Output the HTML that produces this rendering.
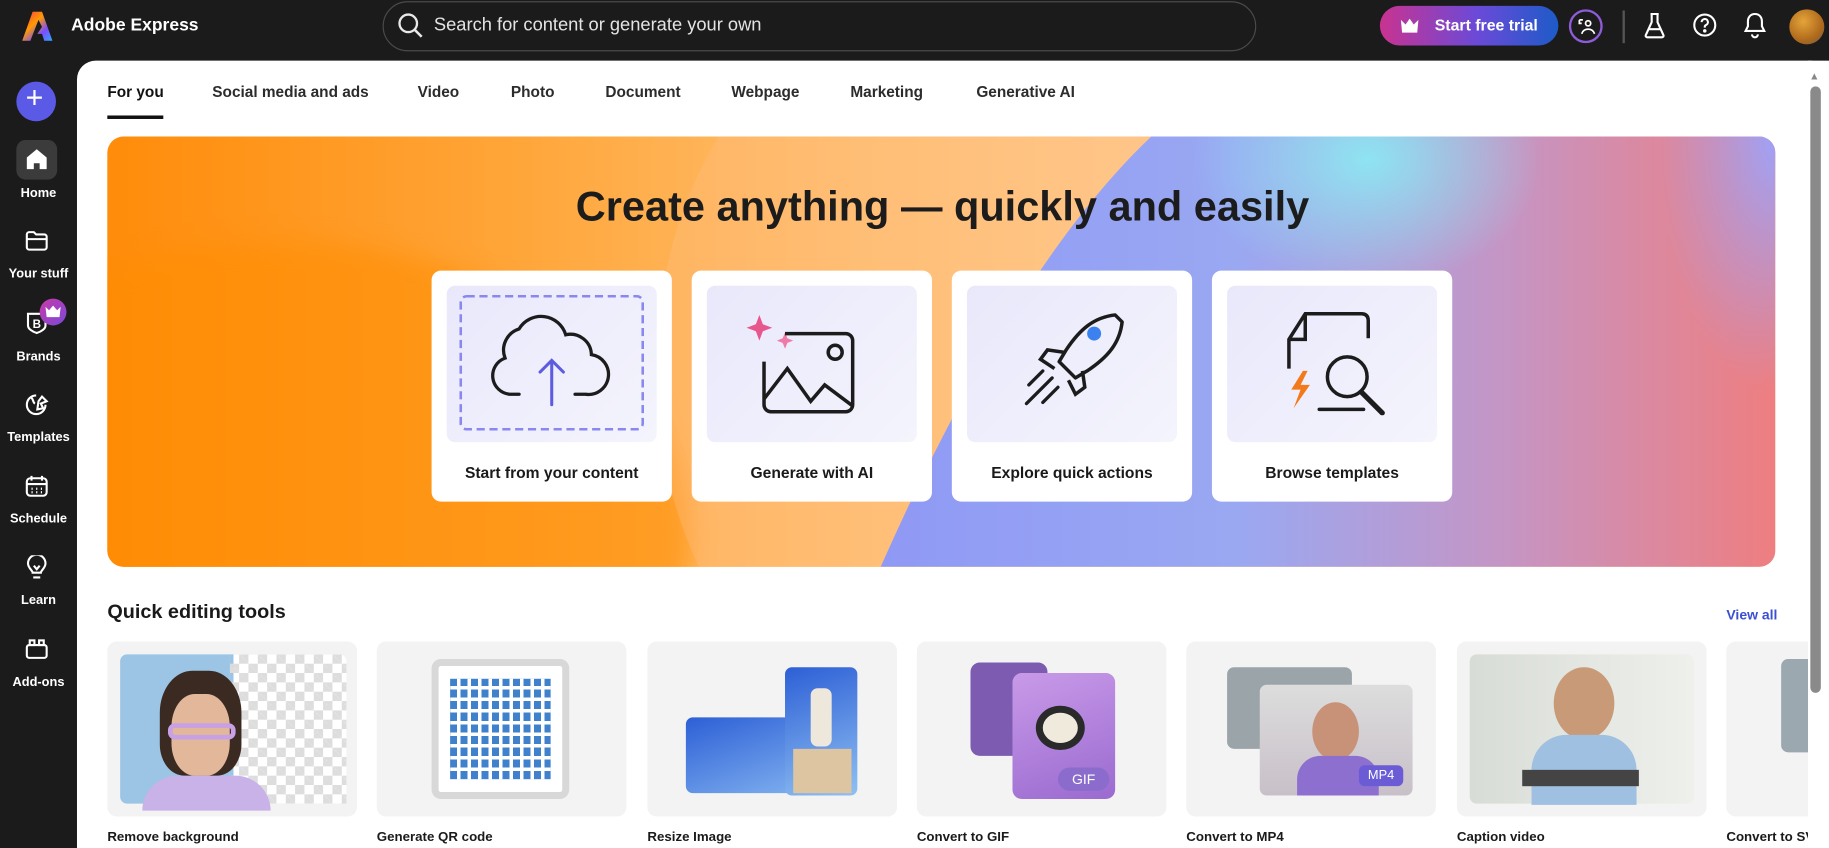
<!DOCTYPE html>
<html><head><meta charset="utf-8">
<style>
*{box-sizing:border-box;margin:0;padding:0}
html,body{width:1829px;height:848px;overflow:hidden;background:#1b1b1b;font-family:"Liberation Sans",sans-serif}
#w{position:absolute;left:0;top:0;width:1568px;height:727px;transform:scale(1.16645);transform-origin:0 0;background:#1b1b1b;overflow:hidden}
.a{position:absolute}
.t{position:absolute;white-space:nowrap}
.side{color:#fff;font-size:11px;font-weight:bold;width:66px;text-align:center;left:0}
.tab{top:71px;font-size:13.2px;color:#2c2c2c;font-weight:bold}
.card{position:absolute;top:232px;width:206px;height:198px;background:#fff;border-radius:8px}
.card .in{position:absolute;left:13px;top:13px;width:180px;height:134px;border-radius:7px;background:linear-gradient(135deg,#e9e8fb,#f4f4fd)}
.card .lb{position:absolute;top:166px;width:100%;text-align:center;font-size:13.4px;font-weight:bold;color:#1a1a1a}
.tool{position:absolute;top:550px;width:214px;height:150px;background:#f3f3f3;border-radius:8px;overflow:hidden}
.tl{position:absolute;top:712px;font-size:11.4px;font-weight:bold;color:#1a1a1a}
</style></head><body><div id="w">
<svg class="a" style="left:19px;top:10px" width="26" height="25" viewBox="0 0 26 25"><defs><linearGradient id="lg" x1="0" y1="0" x2="1" y2="1"><stop offset="0" stop-color="#ff2d55"/><stop offset=".4" stop-color="#ff9a00"/><stop offset=".7" stop-color="#7b4dff"/><stop offset="1" stop-color="#2fa8ff"/></linearGradient></defs><path d="M9 0h8l9 25h-7l-2-6h-4l4-6-3-6-7 18H0z" fill="url(#lg)"/></svg>
<div class="t" style="left:61px;top:13px;color:#fff;font-size:15px;font-weight:bold">Adobe Express</div>
<div class="a" style="left:328px;top:1px;width:749px;height:43px;border:1.5px solid #4a4a4a;border-radius:22px"></div>
<svg class="a" style="left:341px;top:11px" width="22" height="22" viewBox="0 0 22 22"><circle cx="9" cy="9" r="7.5" fill="none" stroke="#e8e8e8" stroke-width="2"/><path d="M14.5 14.5l6 6" stroke="#e8e8e8" stroke-width="2.2"/></svg>
<div class="t" style="left:372px;top:13px;color:#e3e3e3;font-size:15.7px">Search for content or generate your own</div>
<div class="a" style="left:1183px;top:5px;width:153px;height:34px;border-radius:17px;background:linear-gradient(90deg,#c93390,#6a4ad8 55%,#1d5bc8)"></div>
<svg class="a" style="left:1200px;top:15px" width="17" height="14" viewBox="0 0 17 14"><path d="M1 2l4 4 3.5-5 3.5 5 4-4-1 11H2z" fill="#fff"/></svg>
<div class="t" style="left:1230px;top:14px;color:#fff;font-size:13.6px;font-weight:bold">Start free trial</div>
<div class="a" style="left:1345px;top:8px;width:29px;height:29px;border-radius:50%;border:2px solid #8e5cd8"></div>
<svg class="a" style="left:1351px;top:14px" width="17" height="17" viewBox="0 0 17 17" fill="none" stroke="#fff" stroke-width="1.5"><circle cx="10.5" cy="6" r="2.2"/><path d="M5 15c1-3 3-4 5.5-4s4.5 1 5.5 4M3 3h3M3 3v3h2"/></svg>
<div class="a" style="left:1391px;top:9px;width:1.5px;height:28px;background:#555"></div>
<svg class="a" style="left:1409px;top:11px" width="19" height="22" viewBox="0 0 19 22" fill="none" stroke="#fff" stroke-width="1.8"><path d="M6 1h7M7 1v7L2 19c-.5 1 .2 2 1.2 2h12.6c1 0 1.7-1 1.2-2L12 8V1M4 14h11"/></svg>
<svg class="a" style="left:1451px;top:11px" width="21" height="21" viewBox="0 0 21 21" fill="none" stroke="#fff" stroke-width="1.8"><circle cx="10.5" cy="10.5" r="9"/><path d="M7.8 8a2.7 2.7 0 1 1 3.7 2.5c-.7.3-1 .8-1 1.6v.6"/><circle cx="10.5" cy="15.5" r=".6" fill="#fff"/></svg>
<svg class="a" style="left:1494px;top:10px" width="21" height="23" viewBox="0 0 21 23" fill="none" stroke="#fff" stroke-width="1.8"><path d="M10.5 2c-4 0-6 3-6 6.5v4L2.5 16.5h16l-2-4V8.5c0-3.5-2-6.5-6-6.5zM8 19.5a2.5 2.5 0 0 0 5 0"/></svg>
<div class="a" style="left:1534px;top:8px;width:30px;height:30px;border-radius:50%;background:radial-gradient(circle at 40% 35%,#e5a43a,#b06a1c 60%,#6a5a48)"></div>
<div class="a" style="left:14px;top:70px;width:34px;height:34px;border-radius:50%;background:#5a5ae6"></div>
<div class="t" style="left:22px;top:68px;color:#fff;font-size:26px;font-weight:300">+</div>
<div class="a" style="left:14px;top:120px;width:35px;height:34px;border-radius:8px;background:#3b3b3b"></div>
<svg class="a" style="left:22px;top:127px" width="19" height="19" viewBox="0 0 19 19"><path d="M9.5 1L1 8v10h6v-5h5v5h6V8z" fill="#fff"/></svg>
<div class="t side" style="top:160px">Home</div>
<svg class="a" style="left:21px;top:197px" width="21" height="19" viewBox="0 0 21 19" fill="none" stroke="#fff" stroke-width="1.8"><path d="M2 4a2 2 0 0 1 2-2h4l2 2h7a2 2 0 0 1 2 2v9a2 2 0 0 1-2 2H4a2 2 0 0 1-2-2zM2 8h17"/></svg>
<div class="t side" style="top:229px">Your stuff</div>
<svg class="a" style="left:22px;top:266px" width="19" height="21" viewBox="0 0 19 21" fill="none" stroke="#fff" stroke-width="1.8"><path d="M2 3h15v10c0 3-4 5.5-7.5 6.5C6 18.5 2 16 2 13z"/><text x="6" y="15" font-size="10" font-weight="bold" fill="#fff" stroke="none" font-family="Liberation Sans">B</text></svg>
<div class="a" style="left:34px;top:256px;width:23px;height:23px;border-radius:50%;background:linear-gradient(135deg,#c93aa8,#7a4ad8)"></div>
<svg class="a" style="left:39px;top:262px" width="13" height="10" viewBox="0 0 13 10"><path d="M0 1l3 3 3.5-4 3.5 4 3-3-1 9H1z" fill="#fff"/></svg>
<div class="t side" style="top:300px">Brands</div>
<svg class="a" style="left:21px;top:337px" width="21" height="21" viewBox="0 0 21 21" fill="none" stroke="#fff" stroke-width="1.8"><path d="M10 2a8 8 0 1 0 8 8M6 4c2 2 1 4 3 5M12 7l3-4 4 4-5 2 2 4-5 1z"/></svg>
<div class="t side" style="top:369px">Templates</div>
<svg class="a" style="left:21px;top:407px" width="21" height="20" viewBox="0 0 21 20" fill="none" stroke="#fff" stroke-width="1.8"><rect x="2" y="3" width="17" height="15" rx="3"/><path d="M6 1v4M15 1v4M2 8h17"/><path d="M6 12h1M10 12h1M14 12h1M6 15h1M10 15h1M14 15h1" stroke-width="2"/></svg>
<div class="t side" style="top:439px">Schedule</div>
<svg class="a" style="left:22px;top:476px" width="19" height="22" viewBox="0 0 19 22" fill="none" stroke="#fff" stroke-width="1.8"><path d="M6 15c0-2-4-4-4-8a7.5 7.5 0 0 1 15 0c0 4-4 6-4 8zM6.5 19h6M7 9l2.5 3 2.5-3"/></svg>
<div class="t side" style="top:509px">Learn</div>
<svg class="a" style="left:21px;top:547px" width="21" height="19" viewBox="0 0 21 19" fill="none" stroke="#fff" stroke-width="1.8"><rect x="2" y="6" width="17" height="11" rx="2"/><rect x="4.5" y="2" width="4" height="4"/><rect x="12.5" y="2" width="4" height="4"/></svg>
<div class="t side" style="top:579px">Add-ons</div>
<div class="a" style="left:66px;top:52px;width:1502px;height:700px;background:#fff;border-radius:16px 16px 0 0"></div>
<div class="t tab" style="left:92px;color:#111">For you</div>
<div class="a" style="left:92px;top:99px;width:48px;height:3px;background:#111"></div>
<div class="t tab" style="left:182px">Social media and ads</div>
<div class="t tab" style="left:358px">Video</div>
<div class="t tab" style="left:438px">Photo</div>
<div class="t tab" style="left:519px">Document</div>
<div class="t tab" style="left:627px">Webpage</div>
<div class="t tab" style="left:729px">Marketing</div>
<div class="t tab" style="left:837px">Generative AI</div>
<div class="a" style="left:92px;top:117px;width:1430px;height:369px;border-radius:14px;overflow:hidden;background:linear-gradient(90deg,#ff8c0a 0%,#ffa63a 25%,#ffbf70 45%,#ffc98a 60%,#f9b58a 100%)">
 <div class="a" style="left:-200px;top:90px;width:700px;height:500px;border-radius:50%;background:rgba(255,140,0,.55);filter:blur(10px)"></div>
 <div class="a" style="left:470px;top:-150px;width:600px;height:700px;border-radius:50%;background:rgba(255,190,130,.35)"></div>
 <svg class="a" style="left:0;top:0" width="1430" height="369" viewBox="0 0 1430 369"><defs><linearGradient id="hb" x1="0" y1="0" x2="1" y2="0"><stop offset="0" stop-color="#8f99f5"/><stop offset=".4" stop-color="#9aa8f2"/><stop offset=".7" stop-color="#c595c4"/><stop offset="1" stop-color="#ee7e80"/></linearGradient><radialGradient id="cy" cx=".5" cy=".5" r=".5"><stop offset="0" stop-color="#8ee4f2"/><stop offset="1" stop-color="#8ee4f2" stop-opacity="0"/></radialGradient><radialGradient id="rs" cx="1" cy="0" r="1"><stop offset="0" stop-color="#9ea2f8"/><stop offset="1" stop-color="#9ea2f8" stop-opacity="0"/></radialGradient></defs><path d="M663 369C720 240 800 90 895 0H1430V369Z" fill="url(#hb)"/><ellipse cx="1080" cy="20" rx="150" ry="110" fill="url(#cy)"/><rect x="1330" y="0" width="100" height="220" fill="url(#rs)"/></svg>
</div>
<div class="t" style="left:0;width:1616px;text-align:center;top:157px;font-size:35.6px;font-weight:bold;color:#1c1c1c">Create anything — quickly and easily</div>
<div class="card" style="left:370px"><div class="in"></div>
 <svg class="a" style="left:23px;top:20px" width="160" height="118" viewBox="0 0 160 118"><rect x="2" y="2" width="156" height="114" rx="5" fill="none" stroke="#8a88ee" stroke-width="2.2" stroke-dasharray="7 4"/><path d="M52 86h-8a16 16 0 0 1-4-31 19 19 0 0 1 12-25 22 22 0 0 1 40 5 18 18 0 0 1 22 17 17 17 0 0 1-5 34h-9" fill="none" stroke="#1c1c1c" stroke-width="2.8" stroke-linecap="round"/><path d="M80 95V58M70 67l10-10 10 10" fill="none" stroke="#5d5ce0" stroke-width="2.6" stroke-linecap="round"/></svg>
 <div class="lb">Start from your content</div></div>
<div class="card" style="left:593px"><div class="in"></div>
 <svg class="a" style="left:40px;top:30px" width="110" height="100" viewBox="0 0 110 100"><path d="M18 8l3 8 8 3-8 3-3 8-3-8-8-3 8-3z" fill="#e8568e"/><path d="M40 23l2 5 5 2-5 2-2 5-2-5-5-2 5-2z" fill="#ee7aa6"/><path d="M40 24h52a6 6 0 0 1 6 6v55a6 6 0 0 1-6 6H28a6 6 0 0 1-6-6V48" fill="none" stroke="#1c1c1c" stroke-width="3"/><circle cx="83" cy="40" r="6" fill="none" stroke="#1c1c1c" stroke-width="3"/><path d="M22 80l20-26 20 28 12-14 24 18" fill="none" stroke="#1c1c1c" stroke-width="3"/></svg>
 <div class="lb">Generate with AI</div></div>
<div class="card" style="left:816px"><div class="in"></div>
 <svg class="a" style="left:58px;top:34px" width="90" height="90" viewBox="0 0 90 90"><path d="M82 4c-18 2-30 12-42 30l-6 10 14 14 10-6c18-12 28-24 30-42z" fill="none" stroke="#1c1c1c" stroke-width="3" stroke-linejoin="round"/><circle cx="64" cy="20" r="6" fill="#3b82f0"/><path d="M38 36l-14-2-6 8 12 8M54 52l2 14-8 6-6-12" fill="none" stroke="#1c1c1c" stroke-width="3"/><path d="M28 58L6 80M33 66L20 79M20 52L8 64" stroke="#1c1c1c" stroke-width="2.8" stroke-linecap="round"/></svg>
 <div class="lb">Explore quick actions</div></div>
<div class="card" style="left:1039px"><div class="in"></div>
 <svg class="a" style="left:58px;top:34px" width="100" height="90" viewBox="0 0 100 90"><path d="M8 50V25l14-22h48c4 0 6 2 6 6v15" fill="none" stroke="#1c1c1c" stroke-width="3"/><path d="M8 25h14V3" fill="none" stroke="#1c1c1c" stroke-width="3"/><path d="M34 85h38" stroke="#1c1c1c" stroke-width="3" stroke-linecap="round"/><circle cx="58" cy="57" r="17" fill="none" stroke="#1c1c1c" stroke-width="3"/><path d="M70 70l18 18" stroke="#1c1c1c" stroke-width="4.5" stroke-linecap="round"/><path d="M20 52l-10 16h8l-6 16 14-20h-8l6-12z" fill="#f27a1a"/></svg>
 <div class="lb">Browse templates</div></div>
<div class="t" style="left:92px;top:515px;font-size:17px;font-weight:bold;color:#1a1a1a">Quick editing tools</div>
<div class="t" style="left:1480px;top:520px;font-size:12px;font-weight:bold;color:#3c4fd2">View all</div>
<div class="tool" style="left:92px"><div class="a" style="left:11px;top:11px;width:194px;height:128px;border-radius:6px;background:linear-gradient(90deg,#9cc4e4 50%,#fff 50%)"></div>
 <div class="a" style="left:105px;top:11px;width:100px;height:128px;background-image:linear-gradient(45deg,#ddd 25%,transparent 25%,transparent 75%,#ddd 75%),linear-gradient(45deg,#ddd 25%,transparent 25%,transparent 75%,#ddd 75%);background-size:16px 16px;background-position:0 0,8px 8px"></div>
 <div class="a" style="left:45px;top:25px;width:70px;height:90px;border-radius:40% 40% 30% 30%;background:#3a2a22"></div>
 <div class="a" style="left:55px;top:45px;width:50px;height:70px;border-radius:40%;background:#e2b79a"></div>
 <div class="a" style="left:52px;top:70px;width:58px;height:14px;border-radius:6px;border:4px solid #c7a0e6"></div>
 <div class="a" style="left:30px;top:115px;width:110px;height:30px;border-radius:30px 30px 0 0;background:#c8b2e8"></div></div>
<div class="tool" style="left:323px"><div class="a" style="left:47px;top:15px;width:118px;height:120px;border-radius:8px;border:6px solid #d8d8d8;background:#fff"></div>
 <div class="a" style="left:63px;top:32px;width:86px;height:86px;background:repeating-linear-gradient(90deg,#1f6bc4 0 6px,#fff 6px 9px),#1f6bc4;opacity:.85"></div>
 <div class="a" style="left:63px;top:32px;width:86px;height:86px;background:repeating-linear-gradient(0deg,transparent 0 7px,#fff 7px 10px)"></div></div>
<div class="tool" style="left:555px"><div class="a" style="left:33px;top:65px;width:105px;height:65px;border-radius:6px;background:linear-gradient(160deg,#2d5fd6,#7fb0ef)"></div>
 <div class="a" style="left:118px;top:22px;width:62px;height:110px;border-radius:6px;background:linear-gradient(160deg,#2d5fd6,#8fc0f2)"></div>
 <div class="a" style="left:140px;top:40px;width:18px;height:50px;border-radius:6px;background:#eee8dc"></div>
 <div class="a" style="left:125px;top:92px;width:50px;height:38px;background:#dcc5a0"></div></div>
<div class="tool" style="left:786px"><div class="a" style="left:46px;top:18px;width:66px;height:80px;border-radius:8px;background:#7c5bb0"></div>
 <div class="a" style="left:82px;top:27px;width:88px;height:108px;border-radius:8px;background:linear-gradient(160deg,#c99ae8,#9a6ad0)"></div>
 <div class="a" style="left:102px;top:55px;width:42px;height:38px;border-radius:50%;background:#f0eadc;border:6px solid #2a2a2a"></div>
 <div class="a" style="left:121px;top:108px;width:44px;height:20px;border-radius:10px;background:#8b6ccc;color:#fff;font-size:12px;text-align:center;line-height:20px">GIF</div></div>
<div class="tool" style="left:1017px"><div class="a" style="left:35px;top:22px;width:107px;height:70px;border-radius:6px;background:#9ba4a8"></div>
 <div class="a" style="left:63px;top:37px;width:131px;height:95px;border-radius:6px;background:linear-gradient(180deg,#ddd,#c8c0c8)"></div>
 <div class="a" style="left:108px;top:52px;width:40px;height:50px;border-radius:50%;background:#c89278"></div>
 <div class="a" style="left:95px;top:98px;width:70px;height:34px;border-radius:20px 20px 0 0;background:#8d6fd0"></div>
 <div class="a" style="left:148px;top:106px;width:38px;height:18px;border-radius:5px;background:#6b5cd6;color:#fff;font-size:11px;text-align:center;line-height:18px">MP4</div></div>
<div class="tool" style="left:1249px"><div class="a" style="left:11px;top:11px;width:192px;height:128px;border-radius:6px;background:linear-gradient(90deg,#d8dcd6,#eef0ec)"></div>
 <div class="a" style="left:83px;top:22px;width:52px;height:62px;border-radius:50%;background:#c99a78"></div>
 <div class="a" style="left:64px;top:80px;width:90px;height:60px;border-radius:30px 30px 0 0;background:#9fc0e0"></div>
 <div class="a" style="left:56px;top:110px;width:100px;height:14px;background:#444"></div></div>
<div class="tool" style="left:1480px;width:90px"><div class="a" style="left:47px;top:15px;width:40px;height:80px;border-radius:6px;background:#9ba8b0"></div></div>
<div class="tl" style="left:92px">Remove background</div>
<div class="tl" style="left:323px">Generate QR code</div>
<div class="tl" style="left:555px">Resize Image</div>
<div class="tl" style="left:786px">Convert to GIF</div>
<div class="tl" style="left:1017px">Convert to MP4</div>
<div class="tl" style="left:1249px">Caption video</div>
<div class="tl" style="left:1480px">Convert to SVG</div>
<div class="a" style="left:1550px;top:52px;width:18px;height:700px;background:#fff"></div>
<div class="t" style="left:1551px;top:60px;font-size:9px;color:#888">▲</div>
<div class="a" style="left:1552px;top:74px;width:9px;height:520px;border-radius:5px;background:#8a8a8a"></div>
</div></body></html>
